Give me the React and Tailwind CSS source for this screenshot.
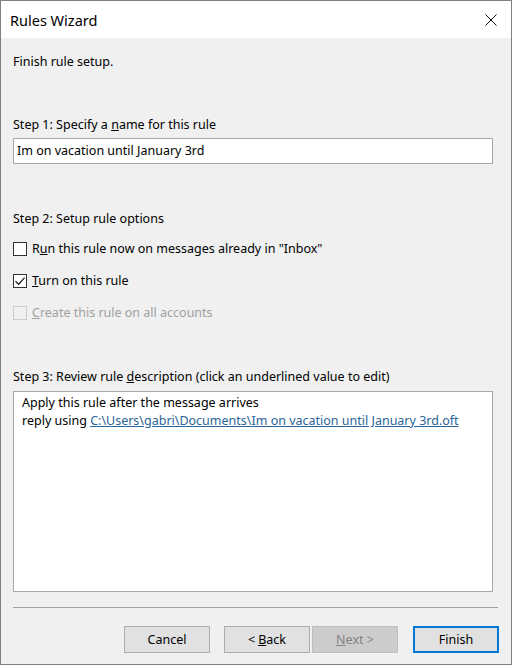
import React from 'react'

const FONT = { fontFamily: '"Noto Sans", "Open Sans", sans-serif' }

function Check({ checked, disabled, children }) {
  return (
    <div className={`flex items-center h-[16px] ${disabled ? 'text-[#a0a0a0]' : 'text-black'}`}>
      <span
        className={`w-[14px] h-[14px] border flex items-center justify-center shrink-0 ${
          disabled ? 'border-[#cccccc] bg-[#f0f0f0]' : 'border-[#333333] bg-white'
        }`}
      >
        {checked && (
          <svg width="12" height="12" viewBox="0 0 12 12">
            <path d="M1.5 6.2 L4.6 9.2 L10.6 2.6" fill="none" stroke="#222" strokeWidth="1.3" />
          </svg>
        )}
      </span>
      <span className="ml-[5px]">{children}</span>
    </div>
  )
}

function Button({ children, primary, disabled }) {
  return (
    <button
      className={`w-[86px] h-[27px] text-[12.5px] flex items-center justify-center ${
        primary
          ? 'border-2 border-[#0078d7] bg-[#e1e1e1] text-black'
          : disabled
          ? 'border border-[#bfbfbf] bg-[#cccccc] text-[#838383]'
          : 'border border-[#adadad] bg-[#e1e1e1] text-black'
      }`}
    >
      {children}
    </button>
  )
}

export default function App() {
  return (
    <div style={FONT} className="w-[512px] h-[665px] border border-[#808080] flex flex-col text-[12.5px] leading-[16px] text-black bg-[#f0f0f0]">
      {/* Title bar */}
      <div className="h-[37px] bg-white flex items-center justify-between pl-[9px] pr-[14px] shrink-0">
        <span className="text-[14.5px]">Rules Wizard</span>
        <svg width="12" height="12" viewBox="0 0 12 12">
          <path d="M0.5 0.5 L11.5 11.5 M11.5 0.5 L0.5 11.5" stroke="#111" strokeWidth="1" />
        </svg>
      </div>

      {/* Body */}
      <div className="flex-1 flex flex-col pl-[12px] pr-[18px] pt-[16px]">
        <div>Finish rule setup.</div>

        <div className="mt-[47px]">
          Step 1: Specify a <span className="underline">n</span>ame for this rule
        </div>
        <div className="mt-[5px] h-[26px] bg-white border border-[#a8a8a8] flex items-center px-[3px]">
          Im on vacation until January 3rd
        </div>

        <div className="mt-[47px]">Step 2: Setup rule options</div>
        <div className="mt-[14px] flex flex-col gap-[16px]">
          <Check>
            R<span className="underline">u</span>n this rule now on messages already in "Inbox"
          </Check>
          <Check checked>
            <span className="underline">T</span>urn on this rule
          </Check>
          <Check disabled>
            <span className="underline">C</span>reate this rule on all accounts
          </Check>
        </div>

        <div className="mt-[48px]">
          Step 3: Review rule <span className="underline">d</span>escription (click an underlined value to edit)
        </div>
        <div className="mt-[6px] h-[201px] bg-white border border-[#a8a8a8] px-[8px] pt-[2px] leading-[18px]">
          <div>Apply this rule after the message arrives</div>
          <div>
            reply using{' '}
            <span className="underline text-[#2b6497]">C:\Users\gabri\Documents\Im on vacation until January 3rd.oft</span>
          </div>
        </div>

        <div className="mt-[15px] mr-[-5px] h-[2px] border-t border-[#a0a0a0] border-b-white" />

        <div className="mt-[17px] flex justify-end mr-[-6px]">
          <Button>Cancel</Button>
          <div className="ml-[14px] flex gap-[2px]">
            <Button>
              &lt; <span className="underline ml-[3px]">B</span>ack
            </Button>
            <Button disabled>
              <span className="underline">N</span>ext &gt;
            </Button>
          </div>
          <div className="ml-[15px]">
            <Button primary>Finish</Button>
          </div>
        </div>
      </div>
    </div>
  )
}
